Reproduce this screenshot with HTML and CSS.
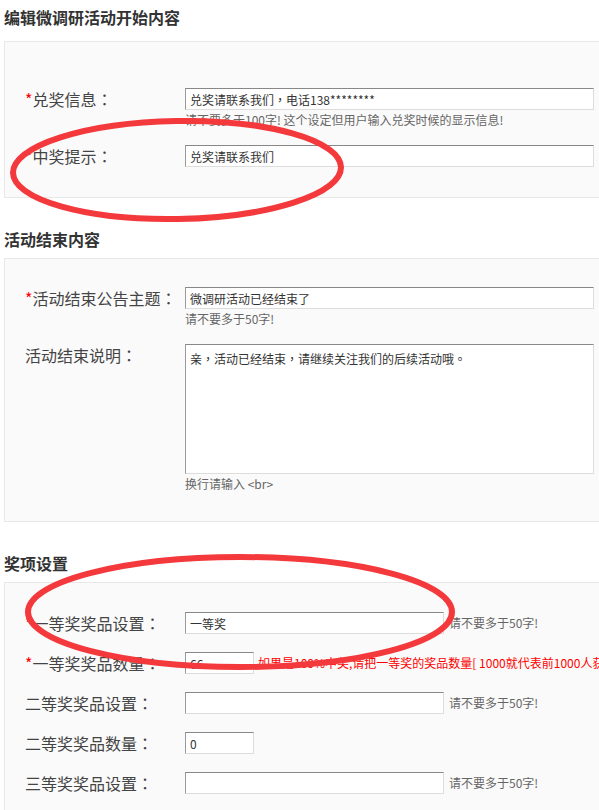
FILE: index.html
```html
<!DOCTYPE html>
<html lang="zh-CN">
<head>
<meta charset="utf-8">
<title>编辑微调研活动</title>
<link rel="stylesheet" href="styles.css">
</head>
<body>
<div class="page">
  <h2 class="section-title section-title-first">编辑微调研活动开始内容</h2>
  <div class="panel panel-first">
    <div class="row">
      <div class="label"><span class="req">*</span>兑奖信息<span class="punct" lang="zh-TW">：</span></div>
      <div class="field">
        <input class="input input-wide" lang="zh-TW" type="text" value="兑奖请联系我们，电话138********" readonly>
        <div class="hint">请不要多于100字! 这个设定但用户输入兑奖时候的显示信息!</div>
      </div>
    </div>
    <div class="row">
      <div class="label"><span class="req">*</span>中奖提示<span class="punct" lang="zh-TW">：</span></div>
      <div class="field">
        <input class="input input-wide" type="text" value="兑奖请联系我们" readonly>
      </div>
    </div>
  </div>

  <h2 class="section-title">活动结束内容</h2>
  <div class="panel">
    <div class="row">
      <div class="label"><span class="req">*</span>活动结束公告主题<span class="punct" lang="zh-TW">：</span></div>
      <div class="field">
        <input class="input input-wide" type="text" value="微调研活动已经结束了" readonly>
        <div class="hint">请不要多于50字!</div>
      </div>
    </div>
    <div class="row">
      <div class="label">活动结束说明<span class="punct" lang="zh-TW">：</span></div>
      <div class="field">
        <textarea class="input textarea" lang="zh-TW" readonly>亲，活动已经结束，请继续关注我们的后续活动哦。</textarea>
        <div class="hint">换行请输入 &lt;br&gt;</div>
      </div>
    </div>
  </div>

  <h2 class="section-title">奖项设置</h2>
  <div class="panel panel-prizes">
    <div class="row">
      <div class="label"><span class="req">*</span>一等奖奖品设置<span class="punct" lang="zh-TW">：</span></div>
      <div class="field field-inline">
        <input class="input input-mid" type="text" value="一等奖" readonly>
        <span class="side-hint">请不要多于50字!</span>
      </div>
    </div>
    <div class="row">
      <div class="label"><span class="req">*</span>一等奖奖品数量<span class="punct" lang="zh-TW">：</span></div>
      <div class="field field-inline">
        <input class="input input-small" type="text" value="66" readonly>
        <span class="side-hint side-hint-red">如果是100%中奖,请把一等奖的奖品数量[ 1000就代表前1000人获奖 ]</span>
      </div>
    </div>
    <div class="row">
      <div class="label">二等奖奖品设置<span class="punct" lang="zh-TW">：</span></div>
      <div class="field field-inline">
        <input class="input input-mid" type="text" value="" readonly>
        <span class="side-hint">请不要多于50字!</span>
      </div>
    </div>
    <div class="row">
      <div class="label">二等奖奖品数量<span class="punct" lang="zh-TW">：</span></div>
      <div class="field field-inline">
        <input class="input input-small" type="text" value="0" readonly>
      </div>
    </div>
    <div class="row">
      <div class="label">三等奖奖品设置<span class="punct" lang="zh-TW">：</span></div>
      <div class="field field-inline">
        <input class="input input-mid" type="text" value="" readonly>
        <span class="side-hint">请不要多于50字!</span>
      </div>
    </div>
  </div>
</div>

<svg class="marks" width="599" height="810" viewBox="0 0 599 810" xmlns="http://www.w3.org/2000/svg">
  <ellipse cx="177" cy="170" rx="164" ry="49" transform="rotate(-1 177 170)" fill="none" stroke="#f4393c" stroke-width="6"/>
  <ellipse cx="240" cy="612" rx="212" ry="55" fill="none" stroke="#f4393c" stroke-width="6"/>
</svg>
</body>
</html>
```

FILE: styles.css
```css
html, body {
  margin: 0;
  padding: 0;
  overflow: hidden;
  background: #fff;
}

body {
  position: relative;
  font-family: "Noto Sans CJK SC", "Microsoft YaHei", "Noto Sans", sans-serif;
  color: #444;
}

.page {
  padding: 0 0 0 4px;
  width: 700px;
}

.section-title {
  font-size: 16px;
  line-height: 22px;
  font-weight: 700;
  color: #333;
  margin: 30px 0 8px;
}

.section-title-first {
  margin: 6px 0 13px;
}

.panel {
  width: 640px;
  box-sizing: border-box;
  background: #fafafa;
  border: 1px solid #e8e8e8;
  padding: 28px 0 30px 20px;
}

.panel-first {
  padding-top: 46px;
}

.panel-prizes {
  padding-top: 29px;
}

.row {
  display: flex;
  align-items: flex-start;
  margin-bottom: 18px;
  white-space: nowrap;
}

.row:last-child {
  margin-bottom: 0;
}

.label {
  width: 160px;
  flex: none;
  font-size: 16px;
  line-height: 22px;
  color: #444;
}

.punct {
  font-family: "Noto Sans CJK TC", "Noto Sans CJK SC", sans-serif;
}

.req {
  color: #f00;
}

.field {
  display: flex;
  flex-direction: column;
}

.field-inline {
  flex-direction: row;
  align-items: center;
}

.input {
  display: block;
  box-sizing: border-box;
  height: 22px;
  margin: 0;
  padding: 0 4px;
  font-family: "Noto Sans CJK TC", "Noto Sans CJK SC", sans-serif;
  font-size: 12px;
  line-height: 20px;
  color: #333;
  background: #fff;
  border: 1px solid #ddd;
  border-top-color: #888;
  border-left-color: #9a9a9a;
  border-radius: 0;
  outline: none;
}

.input-wide {
  width: 409px;
}

.input-mid {
  width: 259px;
}

.input-small {
  width: 69px;
}

.textarea {
  width: 409px;
  height: 130px;
  padding: 4px 4px;
  resize: none;
  overflow: hidden;
}

.hint {
  padding-top: 3px;
  font-size: 12px;
  line-height: 14px;
  color: #666;
}

.side-hint {
  margin-left: 5px;
  font-size: 12px;
  line-height: 22px;
  color: #666;
}

.side-hint-red {
  margin-left: 4px;
  color: #f00;
}

.marks {
  position: absolute;
  left: 0;
  top: 0;
  pointer-events: none;
}
```
